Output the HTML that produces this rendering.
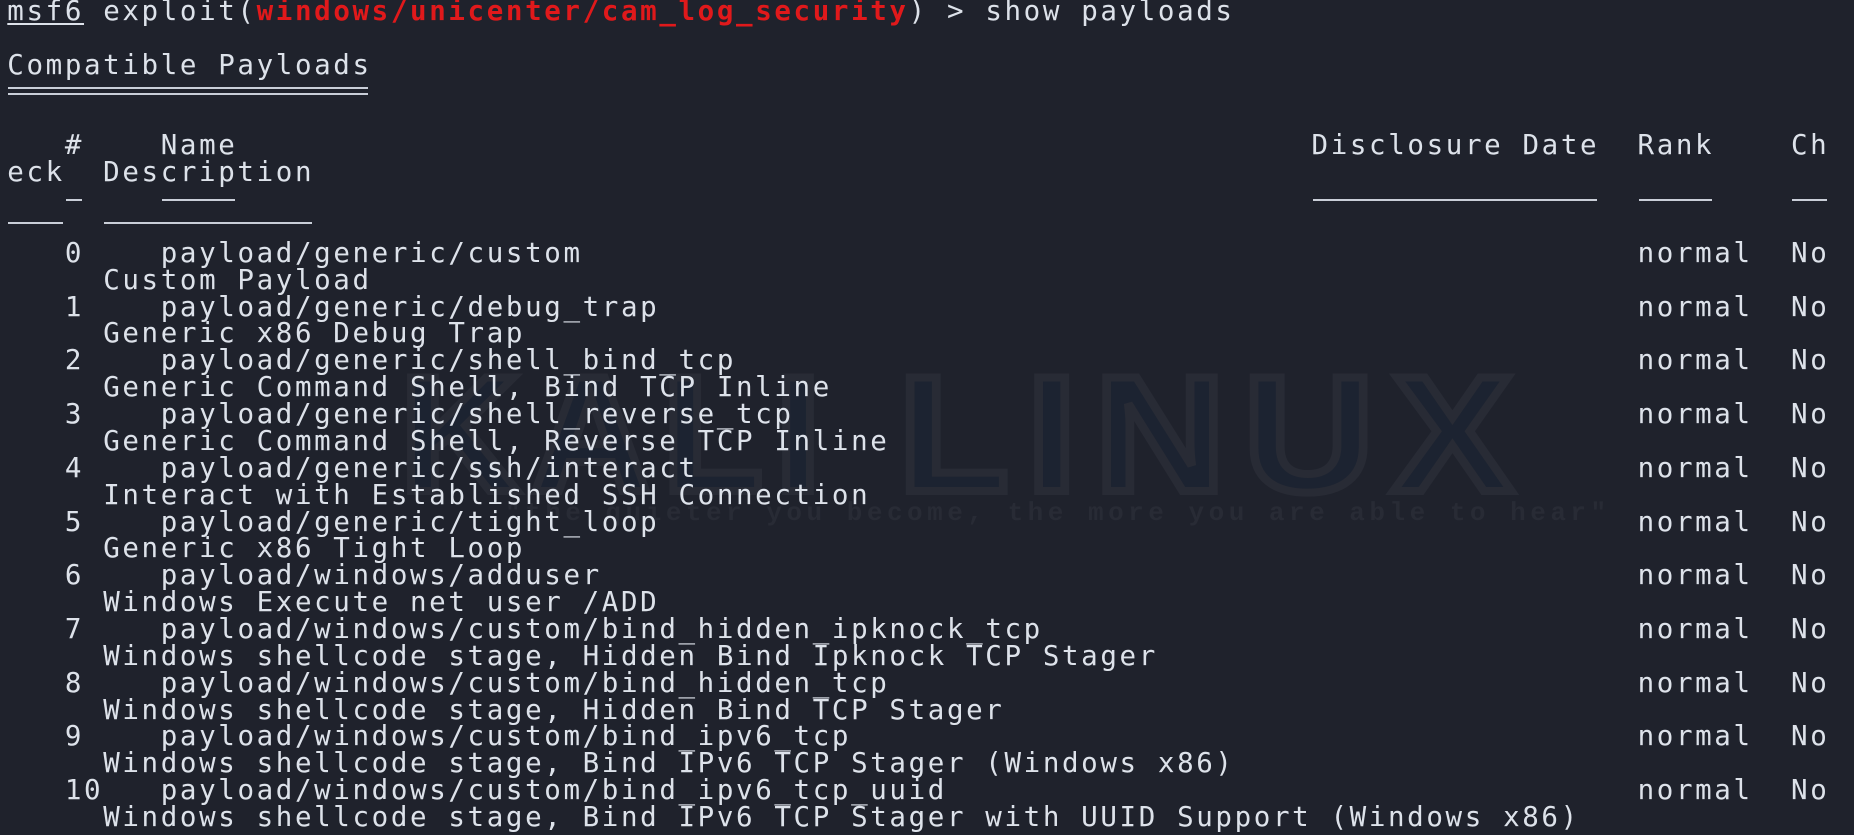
<!DOCTYPE html>
<html><head><meta charset="utf-8"><style>
html,body{margin:0;padding:0;}
body{width:1854px;height:835px;overflow:hidden;background:#1f222c;position:relative;font-family:"DejaVu Sans Mono","Liberation Mono",monospace;font-size:27.5px;letter-spacing:2.62px;color:#dde2ea;}
.l{position:absolute;white-space:pre;line-height:27px;height:27px;}
.r{color:#e0191b;font-weight:bold;}
.u{text-decoration:underline;text-underline-offset:3px;}
.hl{position:absolute;height:2px;background:#c9ced8;}
.wm{position:absolute;top:352px;font-family:"Liberation Sans",sans-serif;font-weight:bold;font-size:165px;color:#1c2331;-webkit-text-stroke:8px #282b35;line-height:1;white-space:pre;transform-origin:0 0;letter-spacing:0;}
.wm2{position:absolute;left:505px;top:498px;font-size:26px;letter-spacing:4.5px;color:#282b35;white-space:pre;font-family:"Liberation Mono",monospace;font-weight:bold;}
</style></head><body>
<div class="wm" style="left:400px;letter-spacing:12px">KALI</div>
<div class="wm" style="left:898px;letter-spacing:16px;transform:scaleX(1.1)">LINUX</div>
<div class="wm2">"the quieter you become, the more you are able to hear"</div>
<div id="c"></div>
<script>
const L=7.3,CW=19.18,T=-2,LH=26.87;
const c=document.getElementById('c');
function put(line,col,html){const d=document.createElement('div');d.className='l';d.style.left=(L+col*CW)+'px';d.style.top=(T+line*LH)+'px';d.innerHTML=html;c.appendChild(d);}
function hl(line,col,n,dy){const d=document.createElement('div');d.className='hl';d.style.left=(L+col*CW+1)+'px';d.style.width=(n*CW-3)+'px';d.style.top=(-2.4+line*LH+LH*0.5+(dy||0))+'px';c.appendChild(d);}
put(0,0,'<span class="u">msf6</span> exploit(<span class="r">windows/unicenter/cam_log_security</span>) &gt; show payloads');
put(2,0,'Compatible Payloads');
(function(){for(const y of [87,93]){const d=document.createElement('div');d.className='hl';d.style.left='8px';d.style.width='360px';d.style.top=y+'px';c.appendChild(d);}})();
put(5,3,'#    Name');
put(5,68,'Disclosure Date  Rank    Ch');
put(6,0,'eck  Description');
hl(7,3,1);hl(7,8,4);hl(7,68,15);hl(7,85,4);hl(7,93,2);
hl(8,0,3,-4);hl(8,5,11,-4);
const rows=[
['0','payload/generic/custom','Custom Payload'],
['1','payload/generic/debug_trap','Generic x86 Debug Trap'],
['2','payload/generic/shell_bind_tcp','Generic Command Shell, Bind TCP Inline'],
['3','payload/generic/shell_reverse_tcp','Generic Command Shell, Reverse TCP Inline'],
['4','payload/generic/ssh/interact','Interact with Established SSH Connection'],
['5','payload/generic/tight_loop','Generic x86 Tight Loop'],
['6','payload/windows/adduser','Windows Execute net user /ADD'],
['7','payload/windows/custom/bind_hidden_ipknock_tcp','Windows shellcode stage, Hidden Bind Ipknock TCP Stager'],
['8','payload/windows/custom/bind_hidden_tcp','Windows shellcode stage, Hidden Bind TCP Stager'],
['9','payload/windows/custom/bind_ipv6_tcp','Windows shellcode stage, Bind IPv6 TCP Stager (Windows x86)'],
['10','payload/windows/custom/bind_ipv6_tcp_uuid','Windows shellcode stage, Bind IPv6 TCP Stager with UUID Support (Windows x86)']
];
rows.forEach((r,i)=>{const ln=9+2*i;put(ln,3,r[0]);put(ln,8,r[1]);put(ln,85,'normal');put(ln,93,'No');put(ln+1,5,r[2]);});
</script>
</body></html>
